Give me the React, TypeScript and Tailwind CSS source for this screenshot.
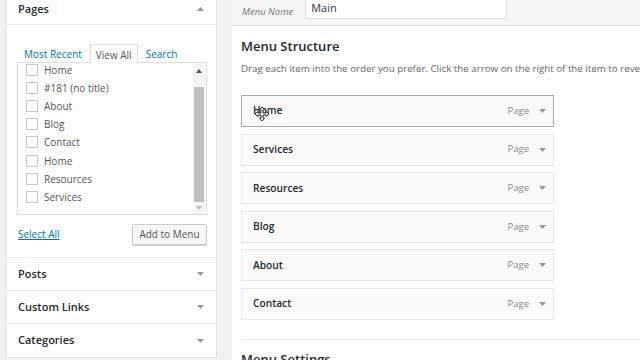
import React from "react";

const Caret = ({ up = false }: { up?: boolean }) => (
  <svg width="7" height="4" viewBox="0 0 7 4" className="block">
    {up ? <polygon points="0,4 7,4 3.5,0" fill="#999" /> : <polygon points="0,0 7,0 3.5,4" fill="#999" />}
  </svg>
);

const pages = ["Home", "#181 (no title)", "About", "Blog", "Contact", "Home", "Resources", "Services"];
const menuItems = ["Home", "Services", "Resources", "Blog", "About", "Contact"];

export default function App() {
  return (
    <div className="w-[640px] h-[360px] overflow-hidden bg-[#f1f1f1] flex font-['Open_Sans',sans-serif] text-[#32373c]">
      {/* Left column */}
      <div className="ml-[6px] w-[211px] h-[358px] bg-white border-x border-b border-[#e5e5e5] flex flex-col shrink-0">
        {/* Pages header */}
        <div className="h-[25px] shrink-0 border-b border-[#eeeeee] flex items-center justify-between pl-[11px] pr-[12px]">
          <span className="text-[11px] font-semibold text-[#23282d] leading-none mt-[-7px]">Pages</span>
          <span className="mt-[-7px]"><Caret up /></span>
        </div>
        {/* Pages body */}
        <div className="h-[233px] shrink-0 border-b border-[#eeeeee] pl-[10px] pr-[9px] flex flex-col">
          <div className="mt-[19px] h-[18px] flex items-end text-[10px] leading-none">
            <span className="text-[#0073aa] ml-[7px] mb-[3px]">Most Recent</span>
            <span className="ml-[8px] h-[19px] mb-[-1px] px-[5px] border-x border-t border-[#dddddd] bg-white text-[#555] flex items-center pt-[1px] relative z-10">View All</span>
            <span className="text-[#0073aa] ml-[8px] mb-[3px]">Search</span>
          </div>
          <div className="h-[153px] border border-[#dddddd] flex overflow-hidden">
            <div className="flex-1 flex flex-col pl-[8px] mt-[-2px]">
              {pages.map((p, i) => (
                <div key={i} className="h-[18.1px] flex items-center shrink-0">
                  <span className="w-[12px] h-[12px] border border-[#c8c8c8] bg-white shrink-0" />
                  <span className="ml-[6px] text-[10px] text-[#555] leading-none">{p}</span>
                </div>
              ))}
            </div>
            <div className="w-[12px] mr-[1px] flex flex-col items-center bg-[#f4f4f4]">
              <div className="h-[16px] flex items-center justify-center">
                <svg width="6" height="4" viewBox="0 0 6 4"><polygon points="0,4 6,4 3,0" fill="#555" /></svg>
              </div>
              <div className="w-[10px] h-[115px] mt-[8px] bg-[#c1c1c1]" />
              <div className="flex-1 flex items-center justify-center">
                <svg width="6" height="4" viewBox="0 0 6 4"><polygon points="0,0 6,0 3,4" fill="#bbb" /></svg>
              </div>
            </div>
          </div>
          <div className="mt-[9px] flex items-center justify-between">
            <span className="text-[10px] text-[#0073aa] underline ml-[1px]">Select All</span>
            <span className="h-[21px] w-[75px] border border-[#cccccc] bg-[#f7f7f7] rounded-[2px] shadow-[0_1px_0_#ccc] flex items-center justify-center text-[10px] text-[#555]">Add to Menu</span>
          </div>
        </div>
        {["Posts", "Custom Links", "Categories"].map((s, i) => (
          <div key={s} className={`h-[33px] shrink-0 flex items-center justify-between pl-[11px] pr-[12px] ${i < 2 ? "border-b border-[#eeeeee]" : ""}`}>
            <span className="text-[11px] font-semibold text-[#23282d]">{s}</span>
            <Caret />
          </div>
        ))}
      </div>

      {/* Right column */}
      <div className="ml-[15px] flex-1 flex flex-col">
        <div className="h-[26px] bg-[#f6f6f6] border-b border-[#e2e2e2] flex items-start pl-[10px] shrink-0">
          <span className="italic text-[9.5px] text-[#777] mt-[5px]">Menu Name</span>
          <div className="ml-[12px] mt-[-2px] w-[202px] h-[21px] bg-white border border-[#e0e0e0] flex items-center pl-[5px] text-[11px] text-[#32373c]">Main</div>
        </div>
        <div className="flex-1 bg-white pl-[9px] flex flex-col">
          <div className="mt-[11px] text-[13px] font-semibold text-[#23282d] leading-[18px]">Menu Structure</div>
          <div className="mt-[7px] text-[9.75px] text-[#666] leading-[14px] whitespace-nowrap">Drag each item into the order you prefer. Click the arrow on the right of the item to reveal additional configuration options.</div>
          <div className="mt-[19px] flex flex-col gap-[6.6px]">
            {menuItems.map((m, i) => (
              <div
                key={m}
                className={`relative w-[313px] h-[32px] flex items-center pl-[11px] pr-[7px] ${i === 0 ? "border border-[#a9a9a9] bg-[#fafafa]" : "border border-[#e8e8e8] bg-[#fbfbfb]"}`}
              >
                <span className="text-[10.2px] font-semibold text-[#23282d] flex-1">{m}</span>
                <span className="text-[9.5px] text-[#888]">Page</span>
                <span className="ml-[10px]"><Caret /></span>
                {i === 0 && (
                  <svg className="absolute left-[12px] top-[10px]" width="16" height="16" viewBox="0 0 16 16">
                    <path d="M8 1 L10.5 4 H9 V7 H12 V5.5 L15 8 L12 10.5 V9 H9 V12 H10.5 L8 15 L5.5 12 H7 V9 H4 V10.5 L1 8 L4 5.5 V7 H7 V4 H5.5 Z" fill="white" stroke="#222" strokeWidth="1" strokeLinejoin="round" />
                  </svg>
                )}
              </div>
            ))}
          </div>
          <div className="mt-[19px] border-t border-[#eeeeee] pt-[10px] text-[13px] font-semibold text-[#23282d] leading-[18px]">Menu Settings</div>
        </div>
      </div>
    </div>
  );
}
